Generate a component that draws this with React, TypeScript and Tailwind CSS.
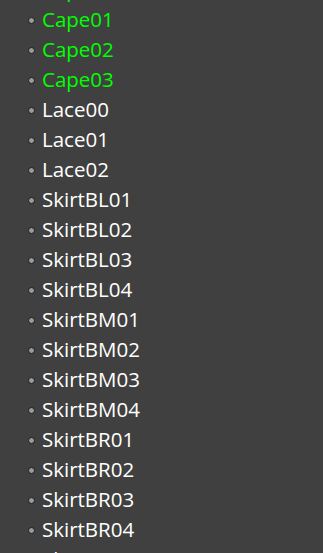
const items: { name: string; green?: boolean }[] = [
  { name: "Cape00", green: true },
  { name: "Cape01", green: true },
  { name: "Cape02", green: true },
  { name: "Cape03", green: true },
  { name: "Lace00" },
  { name: "Lace01" },
  { name: "Lace02" },
  { name: "SkirtBL01" },
  { name: "SkirtBL02" },
  { name: "SkirtBL03" },
  { name: "SkirtBL04" },
  { name: "SkirtBM01" },
  { name: "SkirtBM02" },
  { name: "SkirtBM03" },
  { name: "SkirtBM04" },
  { name: "SkirtBR01" },
  { name: "SkirtBR02" },
  { name: "SkirtBR03" },
  { name: "SkirtBR04" },
  { name: "SkirtFL01" },
];

export default function App() {
  return (
    <div className="w-[323px] h-[553px] overflow-hidden bg-[#404040]" style={{ fontFamily: '"Open Sans", "Noto Sans", sans-serif' }}>
      <ul className="-mt-[25px]">
        {items.map((it) => (
          <li key={it.name} className="flex items-center h-[30px]">
            <span className="ml-[28px] w-[7px] h-[7px] rounded-full bg-[#9a9a9a] border border-[#1c1c1c]" />
            <span className={`ml-[7px] text-[20.5px] leading-none -mt-[1px] ${it.green ? "text-[#00ff00]" : "text-white"}`}>
              {it.name}
            </span>
          </li>
        ))}
      </ul>
    </div>
  );
}
